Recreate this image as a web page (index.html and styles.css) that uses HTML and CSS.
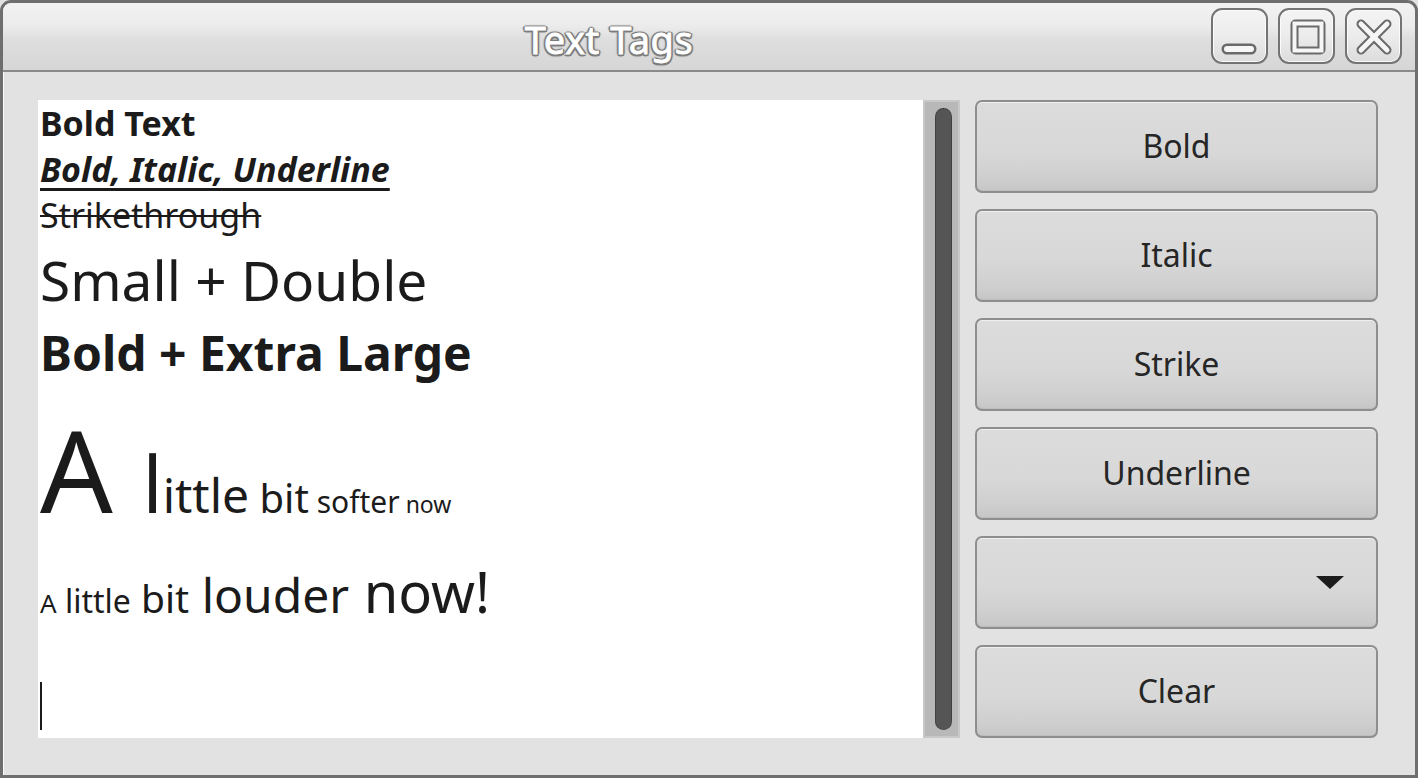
FILE: index.html
```html
<!DOCTYPE html>
<html>
<head>
<meta charset="utf-8">
<title>Text Tags</title>
<link rel="stylesheet" href="styles.css">
</head>
<body>
<div class="window">
  <div class="titlebar">
    <div class="title">Text Tags</div>
    <div class="controls">
      <div class="wbtn">
        <svg width="56" height="55" viewBox="0 0 56 55">
          <line x1="15" y1="40" x2="39" y2="40" stroke="#6a6a6a" stroke-width="11" stroke-linecap="round"/>
          <line x1="15" y1="40" x2="39" y2="40" stroke="#f6f6f6" stroke-width="6" stroke-linecap="round"/>
        </svg>
      </div>
      <div class="wbtn">
        <svg width="56" height="55" viewBox="0 0 56 55">
          <rect x="15.5" y="14.5" width="27" height="27" fill="none" stroke="#6a6a6a" stroke-width="8" rx="1"/>
          <rect x="15.5" y="14.5" width="27" height="27" fill="none" stroke="#f6f6f6" stroke-width="4"/>
        </svg>
      </div>
      <div class="wbtn">
        <svg width="56" height="55" viewBox="0 0 56 55">
          <g stroke="#6a6a6a" stroke-width="9" stroke-linecap="round">
            <line x1="15" y1="15" x2="41" y2="41"/>
            <line x1="41" y1="15" x2="15" y2="41"/>
          </g>
          <g stroke="#f6f6f6" stroke-width="5" stroke-linecap="round">
            <line x1="15" y1="15" x2="41" y2="41"/>
            <line x1="41" y1="15" x2="15" y2="41"/>
          </g>
        </svg>
      </div>
    </div>
  </div>
  <div class="body">
    <div class="view">
      <div class="text">
        <div class="line base bold">Bold Text</div>
        <div class="line base bold italic underline">Bold, Italic, Underline</div>
        <div class="line base strike">Strikethrough</div>
        <div class="line double">Small + Double</div>
        <div class="line xlarge bold">Bold + Extra Large</div>
        <div class="line soft"><span class="s1">A </span><span class="s2">l</span><span class="s3">ittle</span><span class="s4"> bit</span><span class="s5"> softer</span><span class="s6"> now</span></div>
        <div class="line loud"><span class="l1">A</span><span class="l2"> little</span><span class="l3"> bit</span><span class="l4"> louder</span><span class="l5"> now!</span></div>
        <div class="caret"></div>
      </div>
      <div class="scrollbar"><div class="thumb"></div></div>
    </div>
    <div class="buttons">
      <div class="btn">Bold</div>
      <div class="btn">Italic</div>
      <div class="btn">Strike</div>
      <div class="btn">Underline</div>
      <div class="btn combo"><span class="arrow"></span></div>
      <div class="btn">Clear</div>
    </div>
  </div>
</div>
</body>
</html>
```

FILE: styles.css
```css
html, body {
  margin: 0;
  padding: 0;
  width: 1418px;
  height: 778px;
  overflow: hidden;
  background: #e2e2e2;
}

.window {
  box-sizing: border-box;
  width: 1418px;
  height: 778px;
  border: 3px solid #6e6e6e;
  border-radius: 11px 11px 0 0;
  background: #e2e2e2;
  display: flex;
  flex-direction: column;
  font-family: "Noto Sans", "Open Sans", sans-serif;
  box-shadow: inset 1px 0 0 #fafafa;
}

.titlebar {
  box-sizing: border-box;
  height: 69px;
  flex: none;
  display: flex;
  align-items: flex-start;
  border-bottom: 2px solid #8a8a8a;
  border-radius: 9px 9px 0 0;
  background: linear-gradient(#f2f2f2 0%, #ebebeb 35%, #dedede 55%, #d6d6d6 100%);
}

.title {
  flex: 1;
  text-align: center;
  font-size: 38px;
  line-height: 72px;
  padding-left: 4px;
  color: #ffffff;
  letter-spacing: 0.5px;
  text-shadow:
    1.5px 0 0 #7c7c7c, -1.5px 0 0 #7c7c7c, 0 1.5px 0 #7c7c7c, 0 -1.5px 0 #7c7c7c,
    1.5px 1.5px 0 #7c7c7c, -1.5px 1.5px 0 #7c7c7c, 1.5px -1.5px 0 #7c7c7c, -1.5px -1.5px 0 #7c7c7c,
    2.5px 0 1px #a8a8a8, -2.5px 0 1px #a8a8a8, 0 2.5px 1px #a8a8a8, 0 -2.5px 1px #a8a8a8;
  -webkit-text-stroke: 0.8px #ffffff;
}

.controls {
  display: flex;
  gap: 10px;
  padding-top: 5px;
  padding-right: 13px;
}

.wbtn {
  box-sizing: border-box;
  width: 57px;
  height: 56px;
  border: 2px solid #747474;
  border-radius: 11px;
  background: linear-gradient(#f4f4f4 0%, #ececec 50%, #dcdcdc 100%);
  box-shadow: inset 0 0 0 1px #fbfbfb;
  display: flex;
  align-items: center;
  justify-content: center;
}

.wbtn svg {
  display: block;
  margin: -2px;
}

.body {
  flex: 1;
  display: flex;
  gap: 15px;
  padding: 28px 37px 34px 35px;
}

.view {
  width: 922px;
  height: 638px;
  display: flex;
  flex: none;
}

.text {
  width: 885px;
  height: 638px;
  background: #ffffff;
  color: #1b1b1b;
  overflow: hidden;
  padding-left: 2px;
  box-sizing: border-box;
}

.line {
  white-space: nowrap;
}

.base {
  font-size: 34px;
}

.bold { font-weight: 700; }
.italic { font-style: italic; }
.underline {
  text-decoration: underline;
  text-decoration-thickness: 2.5px;
  text-underline-offset: 6px;
}
.strike {
  text-decoration: line-through;
  text-decoration-thickness: 2px;
}

.double {
  font-size: 55px;
  margin-top: 4px;
}

.xlarge {
  font-size: 48px;
  margin-top: 3px;
}

.soft {
  margin-top: 6px;
}
.s1 { font-size: 114px; }
.s2 { font-size: 78px; }
.s3 { font-size: 48px; }
.s4 { font-size: 40px; }
.s5 { font-size: 30px; }
.s6 { font-size: 23px; }

.loud {
  margin-top: 7px;
}
.l1 { font-size: 26px; }
.l2 { font-size: 32px; }
.l3 { font-size: 39px; }
.l4 { font-size: 48px; }
.l5 { font-size: 56px; }

.caret {
  width: 2px;
  height: 48px;
  background: #1b1b1b;
  margin-top: 53px;
  margin-left: 0;
}

.scrollbar {
  box-sizing: border-box;
  width: 37px;
  height: 638px;
  background: #b8b8b8;
  border: 2px solid #c8c8c8;
  padding: 6px 8px 6px 10px;
}

.thumb {
  box-sizing: border-box;
  width: 17px;
  height: 100%;
  background: #555555;
  border: 1px dotted #2e2e2e;
  border-radius: 9px;
}

.buttons {
  width: 403px;
  flex: none;
  display: flex;
  flex-direction: column;
  gap: 16px;
}

.btn {
  box-sizing: border-box;
  height: 93px;
  border: 2px solid #8e8e8e;
  border-radius: 7px;
  background: linear-gradient(#dcdcdc 0%, #d8d8d8 55%, #d2d2d2 75%, #cdcdcd 88%, #c6c6c6 100%);
  box-shadow: inset 0 1px 0 #f0f0f0, inset 0 -1px 0 #bdbdbd;
  display: flex;
  align-items: center;
  justify-content: center;
  font-size: 32px;
  color: #262626;
  padding-bottom: 2px;
}

.combo {
  justify-content: flex-end;
  padding-right: 32px;
}

.arrow {
  width: 0;
  height: 0;
  border-left: 14px solid transparent;
  border-right: 14px solid transparent;
  border-top: 13px solid #1c1c1c;
  margin-top: 2px;
}
```
